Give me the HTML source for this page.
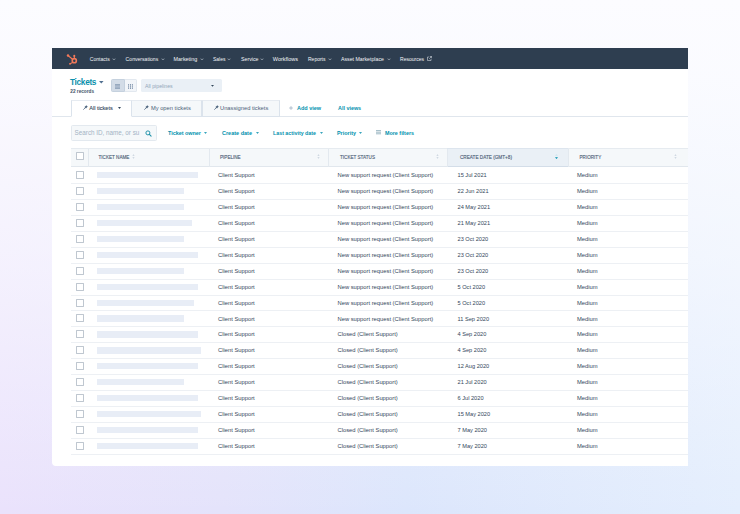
<!DOCTYPE html>
<html><head><meta charset="utf-8">
<style>
*{box-sizing:border-box;margin:0;padding:0}
html,body{width:740px;height:514px;overflow:hidden}
body{position:relative;font-family:"Liberation Sans",sans-serif;color:#33475b;
background:linear-gradient(180deg,rgba(252,252,255,1) 0%,rgba(252,252,255,.92) 15%,rgba(252,252,255,.6) 50%,rgba(252,252,255,0) 100%),linear-gradient(90deg,#eae2fc 0%,#e4e3fb 30%,#dce6fc 55%,#e4eefd 100%);}
.a{position:absolute;white-space:nowrap}
#card{position:absolute;left:52px;top:48px;width:636px;height:418px;background:#fff;border-radius:0 0 0 4px;overflow:hidden}
#nav{position:absolute;left:0;top:0;width:636px;height:21px;background:#2e3e50}
.nt{position:absolute;top:8.2px;font-size:5.05px;line-height:7px;color:#f3f5f8}
.cv{position:absolute;top:10.2px}
.tri{position:absolute;width:0;height:0;border-left:1.3px solid transparent;border-right:1.3px solid transparent;border-top:1.3px solid currentColor}
.link{position:absolute;white-space:nowrap;color:#0091ae;font-weight:bold;font-size:5.4px;line-height:8px}
.tab{position:absolute;top:52px;height:17px;border:1px solid #dbe3ec;background:#f5f8fa;font-size:5.8px;line-height:15.5px;color:#33475b;white-space:nowrap}
.th{position:absolute;top:101px;font-size:4.55px;line-height:17.5px;color:#4d6177;white-space:nowrap}
.srt{position:absolute;top:106.1px}
.cell{position:absolute;font-size:5.8px;line-height:16px;color:#33475b;white-space:nowrap}
.bar{position:absolute;left:45px;height:6.2px;background:#e8edf6}
.cb{position:absolute;left:24.2px;width:8px;height:8px;border:.7px solid #bfc7d0;border-radius:.4px;background:#fff}
.rline{position:absolute;left:19px;width:617px;height:1px;background:#edf0f4}
.vd{position:absolute;top:101px;width:1px;height:17.5px;background:#e3e9ef}
</style></head><body>
<div id="card">
<div id="nav">
<svg class="a" style="left:14px;top:5.5px" width="13" height="12" viewBox="0 0 13 12">
<g stroke="#f2795a" fill="none" stroke-linecap="round">
<circle cx="8.3" cy="6.7" r="2.05" stroke-width="1.6"/>
<line x1="6.6" y1="5.3" x2="2.2" y2="1.8" stroke-width="1.1"/>
<line x1="8.3" y1="4.5" x2="8.3" y2="2" stroke-width="1.1"/>
<line x1="6.9" y1="8.3" x2="4.2" y2="9.7" stroke-width="1.1"/>
</g>
<circle cx="2" cy="1.6" r="1.25" fill="#f2795a"/>
<circle cx="8.3" cy="1.9" r="1.05" fill="#f2795a"/>
<circle cx="4" cy="9.8" r="0.9" fill="#f2795a"/>
</svg>
<div class="nt" style="left:37.8px">Contacts</div><svg class="cv" style="left:60px" width="4" height="2.5" viewBox="0 0 4 2.5"><path d="M.6.8L2 1.7L3.4.8" stroke="#c9d2db" stroke-width=".6" fill="none"/></svg>
<div class="nt" style="left:73.6px;font-size:5.12px">Conversations</div><svg class="cv" style="left:108.5px" width="4" height="2.5" viewBox="0 0 4 2.5"><path d="M.6.8L2 1.7L3.4.8" stroke="#c9d2db" stroke-width=".6" fill="none"/></svg>
<div class="nt" style="left:121.6px;font-size:5.4px">Marketing</div><svg class="cv" style="left:148px" width="4" height="2.5" viewBox="0 0 4 2.5"><path d="M.6.8L2 1.7L3.4.8" stroke="#c9d2db" stroke-width=".6" fill="none"/></svg>
<div class="nt" style="left:161px;font-size:5.0px">Sales</div><svg class="cv" style="left:175px" width="4" height="2.5" viewBox="0 0 4 2.5"><path d="M.6.8L2 1.7L3.4.8" stroke="#c9d2db" stroke-width=".6" fill="none"/></svg>
<div class="nt" style="left:189px;font-size:5.25px">Service</div><svg class="cv" style="left:207.8px" width="4" height="2.5" viewBox="0 0 4 2.5"><path d="M.6.8L2 1.7L3.4.8" stroke="#c9d2db" stroke-width=".6" fill="none"/></svg>
<div class="nt" style="left:220.8px;font-size:5.5px">Workflows</div>
<div class="nt" style="left:256px;font-size:5.0px">Reports</div><svg class="cv" style="left:275.5px" width="4" height="2.5" viewBox="0 0 4 2.5"><path d="M.6.8L2 1.7L3.4.8" stroke="#c9d2db" stroke-width=".6" fill="none"/></svg>
<div class="nt" style="left:289px;font-size:5.22px">Asset Marketplace</div><svg class="cv" style="left:334.8px" width="4" height="2.5" viewBox="0 0 4 2.5"><path d="M.6.8L2 1.7L3.4.8" stroke="#c9d2db" stroke-width=".6" fill="none"/></svg>
<div class="nt" style="left:348px;font-size:5.05px">Resources</div>
<svg class="a" style="left:375.2px;top:8.3px" width="5" height="5" viewBox="0 0 5 5"><path d="M2.8.5h1.7v1.7M4.5.5L2.2 2.8M2 1H.5v3.5H4V2.9" stroke="#dfe5eb" stroke-width=".55" fill="none"/></svg>
</div>

<div class="a" style="left:18px;top:30.3px;font-size:8.3px;line-height:9px;letter-spacing:-.33px;color:#0b91ac;font-weight:bold">Tickets</div>
<svg class="a" style="left:47.2px;top:33.3px" width="4.6" height="2.4" viewBox="0 0 4.6 2.4"><path d="M0 0H4.6L2.30 2.4Z" fill="#516f90"/></svg>
<div class="a" style="left:18.3px;top:41.2px;font-size:4.7px;line-height:5px;color:#3d5166;font-weight:bold">22 records</div>

<div class="a" style="left:59px;top:31px;width:13.5px;height:13.2px;background:#d3dce7;border:.6px solid #c5d1de;border-radius:1.5px 0 0 1.5px"></div>
<div class="a" style="left:72.5px;top:31px;width:12.1px;height:13.2px;background:#f2f5f9;border:.6px solid #e2e8ef;border-left:0;border-radius:0 1.5px 1.5px 0"></div>
<svg class="a" style="left:63.3px;top:35.6px" width="5" height="5" viewBox="0 0 5 5"><path d="M0 .4h5M0 1.8h5M0 3.2h5M0 4.6h5" stroke="#5a7494" stroke-width=".55"/></svg>
<svg class="a" style="left:76px;top:35.6px" width="5" height="5" viewBox="0 0 5 5"><path d="M.6 0v5M2.5 0v5M4.4 0v5" stroke="#5a7494" stroke-width=".7"/><path d="M0 1.7h5M0 3.3h5" stroke="#f2f5f9" stroke-width=".35"/></svg>

<div class="a" style="left:89px;top:31px;width:80.8px;height:13px;background:#eaf0f6;border-radius:1.5px"></div>
<div class="a" style="left:93px;top:33.5px;font-size:5.2px;line-height:8px;color:#92a6ba">All pipelines</div>
<svg class="a" style="left:159.4px;top:37.0px" width="3.0" height="1.7" viewBox="0 0 3.0 1.7"><path d="M0 0H3.0L1.50 1.7Z" fill="#33475b"/></svg>

<div class="a" style="left:0;top:67.6px;width:636px;height:.8px;background:#e0e6ed"></div>
<div class="tab" style="left:18.6px;top:51.5px;height:17.5px;width:61.5px;background:#fff;border-bottom-color:#fff;border-top-color:#e6ebf1"></div>
<div class="tab" style="left:79.5px;top:51.5px;height:17.5px;width:70.7px;border-left:0;border-top-color:#e6ebf1"></div>
<div class="tab" style="left:149.7px;top:51.5px;height:17.5px;width:78px;border-top-color:#e6ebf1"></div>
<svg class="a" style="left:30.5px;top:57.2px" width="5" height="5" viewBox="0 0 5 5"><path d="M3.2.2L4.8 1.8L4 2.3L3 3.6L1.4 2L2.7 1Z" fill="#4f6680"/><path d="M2.1 2.9L.6 4.4" stroke="#4f6680" stroke-width=".8" stroke-linecap="round"/></svg>
<div class="a" style="left:37.2px;top:53px;font-size:5.6px;line-height:15.5px;color:#33475b;-webkit-text-stroke:.1px #33475b">All tickets</div>
<svg class="a" style="left:65.6px;top:59.2px" width="3" height="2" viewBox="0 0 3 2"><path d="M0 0H3L1.5 2Z" fill="#33475b"/></svg>
<svg class="a" style="left:92.2px;top:57.2px" width="5" height="5" viewBox="0 0 5 5"><path d="M3.2.2L4.8 1.8L4 2.3L3 3.6L1.4 2L2.7 1Z" fill="#4f6680"/><path d="M2.1 2.9L.6 4.4" stroke="#4f6680" stroke-width=".8" stroke-linecap="round"/></svg>
<div class="a" style="left:98.9px;top:53px;font-size:5.76px;line-height:15.5px;color:#4b6079">My open tickets</div>
<svg class="a" style="left:162px;top:57.2px" width="5" height="5" viewBox="0 0 5 5"><path d="M3.2.2L4.8 1.8L4 2.3L3 3.6L1.4 2L2.7 1Z" fill="#4f6680"/><path d="M2.1 2.9L.6 4.4" stroke="#4f6680" stroke-width=".8" stroke-linecap="round"/></svg>
<div class="a" style="left:168px;top:53px;font-size:5.75px;line-height:15.5px;color:#4b6079">Unassigned tickets</div>

<svg class="a" style="left:236.6px;top:58.2px" width="4" height="4" viewBox="0 0 4 4"><path d="M2 .1v3.8M.1 2h3.8" stroke="#8aa0b6" stroke-width=".6"/></svg>
<div class="link" style="left:245px;top:55.5px;font-size:5.47px">Add view</div>
<div class="link" style="left:286px;top:55.5px;font-size:5.4px">All views</div>

<div class="a" style="left:18.8px;top:76.5px;width:86.2px;height:16.4px;background:#f5f8fa;border:.7px solid #e3e9ef;border-radius:1.5px"></div>
<div class="a" style="left:22.6px;top:81.3px;font-size:6.3px;line-height:8px;color:#a3b3c4">Search ID, name, or su</div>
<svg class="a" style="left:93px;top:81.6px" width="7" height="7" viewBox="0 0 7 7"><circle cx="2.9" cy="2.9" r="2" stroke="#1a8fa8" stroke-width=".95" fill="none"/><path d="M4.4 4.4L6.1 6.1" stroke="#1a8fa8" stroke-width="1.05" stroke-linecap="round"/></svg>

<div class="link" style="left:116px;top:80.5px;font-size:5.41px">Ticket owner</div><svg class="a" style="left:152.0px;top:84.0px" width="3" height="1.9" viewBox="0 0 3 1.9"><path d="M0 0H3L1.5 1.9Z" fill="#3aa5bd"/></svg>
<div class="link" style="left:170px;top:80.5px;font-size:5.51px">Create date</div><svg class="a" style="left:203.5px;top:84.0px" width="3" height="1.9" viewBox="0 0 3 1.9"><path d="M0 0H3L1.5 1.9Z" fill="#3aa5bd"/></svg>
<div class="link" style="left:221px;top:80.5px;font-size:5.3px">Last activity date</div><svg class="a" style="left:267.5px;top:84.0px" width="3" height="1.9" viewBox="0 0 3 1.9"><path d="M0 0H3L1.5 1.9Z" fill="#3aa5bd"/></svg>
<div class="link" style="left:285px;top:80.5px;font-size:5.43px">Priority</div><svg class="a" style="left:306.5px;top:84.0px" width="3" height="1.9" viewBox="0 0 3 1.9"><path d="M0 0H3L1.5 1.9Z" fill="#3aa5bd"/></svg>
<svg class="a" style="left:324px;top:82.2px" width="5" height="5" viewBox="0 0 5 5"><path d="M0 .6h5M0 2.2h5M0 3.8h5" stroke="#4d7f93" stroke-width=".55"/></svg>
<div class="link" style="left:333px;top:80.5px;font-size:5.38px">More filters</div>

<div class="a" style="left:19px;top:100.2px;width:617px;height:18.4px;background:#f5f8fa;border-top:.8px solid #e6ebf0;border-bottom:.8px solid #e1e7ed"></div>
<div class="a" style="left:395.4px;top:100.2px;width:120.4px;height:18.4px;background:#eaf0f6;border-top:.8px solid #dde5ee;border-bottom:.8px solid #d3dde8"></div>
<div class="vd" style="left:36.2px"></div>
<div class="vd" style="left:157px"></div>
<div class="vd" style="left:275.5px"></div>
<div class="vd" style="left:395.2px"></div>
<div class="vd" style="left:515.8px"></div>
<div class="cb" style="top:104.3px"></div>
<div class="th" style="left:46.5px;font-size:4.61px;-webkit-text-stroke:.12px #4d6177">TICKET NAME</div>
<div class="th" style="left:168px;font-size:4.6px;-webkit-text-stroke:.12px #4d6177">PIPELINE</div>
<div class="th" style="left:288px;font-size:4.6px;-webkit-text-stroke:.12px #4d6177">TICKET STATUS</div>
<div class="th" style="left:408px;font-size:4.66px;-webkit-text-stroke:.12px #4d6177">CREATE DATE (GMT+8)</div>
<div class="th" style="left:527.5px;font-size:4.6px;-webkit-text-stroke:.12px #4d6177">PRIORITY</div>
<svg class="srt" style="left:80.3px" width="3" height="5" viewBox="0 0 3 5"><path d="M1.5 .2L2.6 1.7H.4Z M1.5 4.8L2.6 3.3H.4Z" fill="#c3ceda"/></svg>
<svg class="srt" style="left:264.6px" width="3" height="5" viewBox="0 0 3 5"><path d="M1.5 .2L2.6 1.7H.4Z M1.5 4.8L2.6 3.3H.4Z" fill="#c3ceda"/></svg>
<svg class="srt" style="left:383.9px" width="3" height="5" viewBox="0 0 3 5"><path d="M1.5 .2L2.6 1.7H.4Z M1.5 4.8L2.6 3.3H.4Z" fill="#c3ceda"/></svg>
<svg class="srt" style="left:502.9px" width="3" height="5" viewBox="0 0 3 5"><path d="M1.5 0L3 1.8H0Z" fill="#cfe6ee"/><path d="M1.5 5L3 3.2H0Z" fill="#0091ae"/></svg>
<svg class="srt" style="left:621.9px" width="3" height="5" viewBox="0 0 3 5"><path d="M1.5 .2L2.6 1.7H.4Z M1.5 4.8L2.6 3.3H.4Z" fill="#c3ceda"/></svg>
<div class="cb" style="top:123.00px"></div><div class="bar" style="top:124.00px;width:101px"></div><div class="cell" style="left:166px;top:119.05px">Client Support</div><div class="cell" style="left:285.5px;top:119.05px">New support request (Client Support)</div><div class="cell" style="left:405.5px;top:119.05px;font-size:5.65px">15 Jul 2021</div><div class="cell" style="left:525px;top:119.05px">Medium</div><div class="rline" style="top:134.94px"></div>
<div class="cb" style="top:138.94px"></div><div class="bar" style="top:139.94px;width:87px"></div><div class="cell" style="left:166px;top:134.99px">Client Support</div><div class="cell" style="left:285.5px;top:134.99px">New support request (Client Support)</div><div class="cell" style="left:405.5px;top:134.99px;font-size:5.65px">22 Jun 2021</div><div class="cell" style="left:525px;top:134.99px">Medium</div><div class="rline" style="top:150.88px"></div>
<div class="cb" style="top:154.88px"></div><div class="bar" style="top:155.88px;width:87px"></div><div class="cell" style="left:166px;top:150.93px">Client Support</div><div class="cell" style="left:285.5px;top:150.93px">New support request (Client Support)</div><div class="cell" style="left:405.5px;top:150.93px;font-size:5.65px">24 May 2021</div><div class="cell" style="left:525px;top:150.93px">Medium</div><div class="rline" style="top:166.82px"></div>
<div class="cb" style="top:170.82px"></div><div class="bar" style="top:171.82px;width:95px"></div><div class="cell" style="left:166px;top:166.87px">Client Support</div><div class="cell" style="left:285.5px;top:166.87px">New support request (Client Support)</div><div class="cell" style="left:405.5px;top:166.87px;font-size:5.65px">21 May 2021</div><div class="cell" style="left:525px;top:166.87px">Medium</div><div class="rline" style="top:182.76px"></div>
<div class="cb" style="top:186.76px"></div><div class="bar" style="top:187.76px;width:87px"></div><div class="cell" style="left:166px;top:182.81px">Client Support</div><div class="cell" style="left:285.5px;top:182.81px">New support request (Client Support)</div><div class="cell" style="left:405.5px;top:182.81px;font-size:5.65px">23 Oct 2020</div><div class="cell" style="left:525px;top:182.81px">Medium</div><div class="rline" style="top:198.70px"></div>
<div class="cb" style="top:202.70px"></div><div class="bar" style="top:203.70px;width:101px"></div><div class="cell" style="left:166px;top:198.75px">Client Support</div><div class="cell" style="left:285.5px;top:198.75px">New support request (Client Support)</div><div class="cell" style="left:405.5px;top:198.75px;font-size:5.65px">23 Oct 2020</div><div class="cell" style="left:525px;top:198.75px">Medium</div><div class="rline" style="top:214.64px"></div>
<div class="cb" style="top:218.64px"></div><div class="bar" style="top:219.64px;width:87px"></div><div class="cell" style="left:166px;top:214.69px">Client Support</div><div class="cell" style="left:285.5px;top:214.69px">New support request (Client Support)</div><div class="cell" style="left:405.5px;top:214.69px;font-size:5.65px">23 Oct 2020</div><div class="cell" style="left:525px;top:214.69px">Medium</div><div class="rline" style="top:230.58px"></div>
<div class="cb" style="top:234.58px"></div><div class="bar" style="top:235.58px;width:101px"></div><div class="cell" style="left:166px;top:230.63px">Client Support</div><div class="cell" style="left:285.5px;top:230.63px">New support request (Client Support)</div><div class="cell" style="left:405.5px;top:230.63px;font-size:5.65px">5 Oct 2020</div><div class="cell" style="left:525px;top:230.63px">Medium</div><div class="rline" style="top:246.52px"></div>
<div class="cb" style="top:250.52px"></div><div class="bar" style="top:251.52px;width:97px"></div><div class="cell" style="left:166px;top:246.57px">Client Support</div><div class="cell" style="left:285.5px;top:246.57px">New support request (Client Support)</div><div class="cell" style="left:405.5px;top:246.57px;font-size:5.65px">5 Oct 2020</div><div class="cell" style="left:525px;top:246.57px">Medium</div><div class="rline" style="top:262.46px"></div>
<div class="cb" style="top:266.46px"></div><div class="bar" style="top:267.46px;width:87px"></div><div class="cell" style="left:166px;top:262.51px">Client Support</div><div class="cell" style="left:285.5px;top:262.51px">New support request (Client Support)</div><div class="cell" style="left:405.5px;top:262.51px;font-size:5.65px">11 Sep 2020</div><div class="cell" style="left:525px;top:262.51px">Medium</div><div class="rline" style="top:278.40px"></div>
<div class="cb" style="top:282.40px"></div><div class="bar" style="top:283.40px;width:101px"></div><div class="cell" style="left:166px;top:278.45px">Client Support</div><div class="cell" style="left:285.5px;top:278.45px">Closed (Client Support)</div><div class="cell" style="left:405.5px;top:278.45px;font-size:5.65px">4 Sep 2020</div><div class="cell" style="left:525px;top:278.45px">Medium</div><div class="rline" style="top:294.34px"></div>
<div class="cb" style="top:298.34px"></div><div class="bar" style="top:299.34px;width:104px"></div><div class="cell" style="left:166px;top:294.39px">Client Support</div><div class="cell" style="left:285.5px;top:294.39px">Closed (Client Support)</div><div class="cell" style="left:405.5px;top:294.39px;font-size:5.65px">4 Sep 2020</div><div class="cell" style="left:525px;top:294.39px">Medium</div><div class="rline" style="top:310.28px"></div>
<div class="cb" style="top:314.28px"></div><div class="bar" style="top:315.28px;width:101px"></div><div class="cell" style="left:166px;top:310.33px">Client Support</div><div class="cell" style="left:285.5px;top:310.33px">Closed (Client Support)</div><div class="cell" style="left:405.5px;top:310.33px;font-size:5.65px">12 Aug 2020</div><div class="cell" style="left:525px;top:310.33px">Medium</div><div class="rline" style="top:326.22px"></div>
<div class="cb" style="top:330.22px"></div><div class="bar" style="top:331.22px;width:87px"></div><div class="cell" style="left:166px;top:326.27px">Client Support</div><div class="cell" style="left:285.5px;top:326.27px">Closed (Client Support)</div><div class="cell" style="left:405.5px;top:326.27px;font-size:5.65px">21 Jul 2020</div><div class="cell" style="left:525px;top:326.27px">Medium</div><div class="rline" style="top:342.16px"></div>
<div class="cb" style="top:346.16px"></div><div class="bar" style="top:347.16px;width:101px"></div><div class="cell" style="left:166px;top:342.21px">Client Support</div><div class="cell" style="left:285.5px;top:342.21px">Closed (Client Support)</div><div class="cell" style="left:405.5px;top:342.21px;font-size:5.65px">6 Jul 2020</div><div class="cell" style="left:525px;top:342.21px">Medium</div><div class="rline" style="top:358.10px"></div>
<div class="cb" style="top:362.10px"></div><div class="bar" style="top:363.10px;width:104px"></div><div class="cell" style="left:166px;top:358.15px">Client Support</div><div class="cell" style="left:285.5px;top:358.15px">Closed (Client Support)</div><div class="cell" style="left:405.5px;top:358.15px;font-size:5.65px">15 May 2020</div><div class="cell" style="left:525px;top:358.15px">Medium</div><div class="rline" style="top:374.04px"></div>
<div class="cb" style="top:378.04px"></div><div class="bar" style="top:379.04px;width:101px"></div><div class="cell" style="left:166px;top:374.09px">Client Support</div><div class="cell" style="left:285.5px;top:374.09px">Closed (Client Support)</div><div class="cell" style="left:405.5px;top:374.09px;font-size:5.65px">7 May 2020</div><div class="cell" style="left:525px;top:374.09px">Medium</div><div class="rline" style="top:389.98px"></div>
<div class="cb" style="top:393.98px"></div><div class="bar" style="top:394.98px;width:101px"></div><div class="cell" style="left:166px;top:390.03px">Client Support</div><div class="cell" style="left:285.5px;top:390.03px">Closed (Client Support)</div><div class="cell" style="left:405.5px;top:390.03px;font-size:5.65px">7 May 2020</div><div class="cell" style="left:525px;top:390.03px">Medium</div><div class="rline" style="top:405.92px"></div>

</div>
</body></html>
